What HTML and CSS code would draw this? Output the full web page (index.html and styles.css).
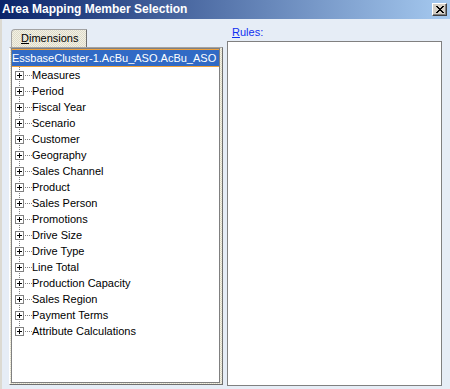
FILE: index.html
```html
<!DOCTYPE html>
<html>
<head>
<meta charset="utf-8">
<title>Area Mapping Member Selection</title>
<link rel="stylesheet" href="styles.css">
</head>
<body>
<div class="window">
  <div class="titlebar">
    <span class="title">Area Mapping Member Selection</span>
    <button class="close" type="button" aria-label="Close">
      <svg width="8" height="7" viewBox="0 0 8 7" shape-rendering="crispEdges"><path fill="#000" d="M0 0h2v1H0zM6 0h2v1H6zM1 1h2v1H1zM5 1h2v1H5zM2 2h4v1H2zM3 3h2v1H3zM2 4h4v1H2zM1 5h2v1H1zM5 5h2v1H5zM0 6h2v1H0zM6 6h2v1H6z"/></svg>
    </button>
  </div>
  <div class="client">
    <div class="left">
      <div class="tabs">
        <div class="tab"><u>D</u>imensions</div>
      </div>
      <div class="panel">
        <div class="tree">
          <div class="root">EssbaseCluster-1.AcBu_ASO.AcBu_ASO</div>
          <div class="children">
            <div class="node"><svg class="exp" width="9" height="9" viewBox="0 0 9 9" shape-rendering="crispEdges"><rect x="0.5" y="0.5" width="8" height="8" fill="#fff" stroke="#808080"/><path d="M2 4.5h5M4.5 2v5" stroke="#000"/></svg><span class="conn"></span><span class="lbl">Measures</span></div>
            <div class="node"><svg class="exp" width="9" height="9" viewBox="0 0 9 9" shape-rendering="crispEdges"><rect x="0.5" y="0.5" width="8" height="8" fill="#fff" stroke="#808080"/><path d="M2 4.5h5M4.5 2v5" stroke="#000"/></svg><span class="conn"></span><span class="lbl">Period</span></div>
            <div class="node"><svg class="exp" width="9" height="9" viewBox="0 0 9 9" shape-rendering="crispEdges"><rect x="0.5" y="0.5" width="8" height="8" fill="#fff" stroke="#808080"/><path d="M2 4.5h5M4.5 2v5" stroke="#000"/></svg><span class="conn"></span><span class="lbl">Fiscal Year</span></div>
            <div class="node"><svg class="exp" width="9" height="9" viewBox="0 0 9 9" shape-rendering="crispEdges"><rect x="0.5" y="0.5" width="8" height="8" fill="#fff" stroke="#808080"/><path d="M2 4.5h5M4.5 2v5" stroke="#000"/></svg><span class="conn"></span><span class="lbl">Scenario</span></div>
            <div class="node"><svg class="exp" width="9" height="9" viewBox="0 0 9 9" shape-rendering="crispEdges"><rect x="0.5" y="0.5" width="8" height="8" fill="#fff" stroke="#808080"/><path d="M2 4.5h5M4.5 2v5" stroke="#000"/></svg><span class="conn"></span><span class="lbl">Customer</span></div>
            <div class="node"><svg class="exp" width="9" height="9" viewBox="0 0 9 9" shape-rendering="crispEdges"><rect x="0.5" y="0.5" width="8" height="8" fill="#fff" stroke="#808080"/><path d="M2 4.5h5M4.5 2v5" stroke="#000"/></svg><span class="conn"></span><span class="lbl">Geography</span></div>
            <div class="node"><svg class="exp" width="9" height="9" viewBox="0 0 9 9" shape-rendering="crispEdges"><rect x="0.5" y="0.5" width="8" height="8" fill="#fff" stroke="#808080"/><path d="M2 4.5h5M4.5 2v5" stroke="#000"/></svg><span class="conn"></span><span class="lbl">Sales Channel</span></div>
            <div class="node"><svg class="exp" width="9" height="9" viewBox="0 0 9 9" shape-rendering="crispEdges"><rect x="0.5" y="0.5" width="8" height="8" fill="#fff" stroke="#808080"/><path d="M2 4.5h5M4.5 2v5" stroke="#000"/></svg><span class="conn"></span><span class="lbl">Product</span></div>
            <div class="node"><svg class="exp" width="9" height="9" viewBox="0 0 9 9" shape-rendering="crispEdges"><rect x="0.5" y="0.5" width="8" height="8" fill="#fff" stroke="#808080"/><path d="M2 4.5h5M4.5 2v5" stroke="#000"/></svg><span class="conn"></span><span class="lbl">Sales Person</span></div>
            <div class="node"><svg class="exp" width="9" height="9" viewBox="0 0 9 9" shape-rendering="crispEdges"><rect x="0.5" y="0.5" width="8" height="8" fill="#fff" stroke="#808080"/><path d="M2 4.5h5M4.5 2v5" stroke="#000"/></svg><span class="conn"></span><span class="lbl">Promotions</span></div>
            <div class="node"><svg class="exp" width="9" height="9" viewBox="0 0 9 9" shape-rendering="crispEdges"><rect x="0.5" y="0.5" width="8" height="8" fill="#fff" stroke="#808080"/><path d="M2 4.5h5M4.5 2v5" stroke="#000"/></svg><span class="conn"></span><span class="lbl">Drive Size</span></div>
            <div class="node"><svg class="exp" width="9" height="9" viewBox="0 0 9 9" shape-rendering="crispEdges"><rect x="0.5" y="0.5" width="8" height="8" fill="#fff" stroke="#808080"/><path d="M2 4.5h5M4.5 2v5" stroke="#000"/></svg><span class="conn"></span><span class="lbl">Drive Type</span></div>
            <div class="node"><svg class="exp" width="9" height="9" viewBox="0 0 9 9" shape-rendering="crispEdges"><rect x="0.5" y="0.5" width="8" height="8" fill="#fff" stroke="#808080"/><path d="M2 4.5h5M4.5 2v5" stroke="#000"/></svg><span class="conn"></span><span class="lbl">Line Total</span></div>
            <div class="node"><svg class="exp" width="9" height="9" viewBox="0 0 9 9" shape-rendering="crispEdges"><rect x="0.5" y="0.5" width="8" height="8" fill="#fff" stroke="#808080"/><path d="M2 4.5h5M4.5 2v5" stroke="#000"/></svg><span class="conn"></span><span class="lbl">Production Capacity</span></div>
            <div class="node"><svg class="exp" width="9" height="9" viewBox="0 0 9 9" shape-rendering="crispEdges"><rect x="0.5" y="0.5" width="8" height="8" fill="#fff" stroke="#808080"/><path d="M2 4.5h5M4.5 2v5" stroke="#000"/></svg><span class="conn"></span><span class="lbl">Sales Region</span></div>
            <div class="node"><svg class="exp" width="9" height="9" viewBox="0 0 9 9" shape-rendering="crispEdges"><rect x="0.5" y="0.5" width="8" height="8" fill="#fff" stroke="#808080"/><path d="M2 4.5h5M4.5 2v5" stroke="#000"/></svg><span class="conn"></span><span class="lbl">Payment Terms</span></div>
            <div class="node"><svg class="exp" width="9" height="9" viewBox="0 0 9 9" shape-rendering="crispEdges"><rect x="0.5" y="0.5" width="8" height="8" fill="#fff" stroke="#808080"/><path d="M2 4.5h5M4.5 2v5" stroke="#000"/></svg><span class="conn"></span><span class="lbl">Attribute Calculations</span></div>
          </div>
        </div>
      </div>
    </div>
    <div class="right">
      <label class="rules-label"><u>R</u>ules:</label>
      <div class="rules-box"></div>
    </div>
  </div>
</div>
</body>
</html>
```

FILE: styles.css
```css
html, body {
  margin: 0;
  padding: 0;
  height: 100%;
}

body {
  font-family: "Liberation Sans", Arial, sans-serif;
  font-size: 11px;
  color: #000;
  background: #e6edf6;
  overflow: hidden;
}

.window {
  height: 389px;
  display: flex;
  flex-direction: column;
}

.titlebar {
  flex: none;
  height: 19px;
  box-sizing: border-box;
  padding: 0 3px 0 2px;
  display: flex;
  align-items: center;
  justify-content: space-between;
  background: linear-gradient(to right, #0a246a, #a6caf0);
}

.title {
  color: #fff;
  font-weight: bold;
  font-size: 12px;
  line-height: 19px;
}

.close {
  width: 15px;
  height: 13px;
  padding: 0;
  margin: 0;
  box-sizing: border-box;
  display: flex;
  align-items: center;
  justify-content: center;
  background: #d4d0c8;
  border: 1px solid;
  border-color: #ffffff #404040 #404040 #ffffff;
  box-shadow: inset -1px -1px 0 #808080;
}

.close svg {
  display: block;
}

.client {
  flex: 1;
  min-height: 0;
  display: flex;
  gap: 4px;
  padding: 7px 8px 3px 7px;
  border-left: 2px solid #dcdad2;
}

.left {
  width: 214px;
  flex: none;
  display: flex;
  flex-direction: column;
  padding-top: 3px;
  margin-bottom: 1px;
}

.tabs {
  display: flex;
  padding-left: 2px;
}

.dotted {
  background: #eceadb;
}

.tab {
  width: 76px;
  height: 18px;
  box-sizing: border-box;
  padding-left: 9px;
  line-height: 16px;
  border: 1px solid;
  border-color: #a3a3a3 #6f6f6f transparent #a3a3a3;
  border-bottom: none;
  border-top-left-radius: 4px;
  background: repeating-conic-gradient(#f2f0e5 0 25%, #dedbc8 0 50%) 0 0 / 2px 2px;
}

.panel {
  flex: 1;
  min-height: 0;
  display: flex;
  flex-direction: column;
  padding: 0 2px 1px 1px;
  border: 1px solid;
  border-color: #a3a3a3 #6f6f6f #6f6f6f #ffffff;
  background: repeating-conic-gradient(#f2f0e5 0 25%, #dedbc8 0 50%) 0 0 / 2px 2px;
}

.tree {
  flex: 1;
  background: #fff;
  border: 1px solid #808080;
  overflow: hidden;
}

.root {
  height: 18px;
  box-sizing: border-box;
  margin: 0 -1px;
  border: 1px solid #f0a23c;
  background: #316ac5;
  color: #fff;
  line-height: 16px;
  white-space: nowrap;
}

.children {
  background-image: repeating-linear-gradient(to bottom, #808080 0 1px, transparent 1px 2px);
  background-repeat: no-repeat;
  background-position: 7px 0;
  background-size: 1px calc(100% - 8px);
}

.node {
  height: 16px;
  display: flex;
  align-items: flex-start;
  padding-left: 3px;
  white-space: nowrap;
}

.exp {
  display: block;
  flex: none;
  margin-top: 4px;
}

.conn {
  flex: none;
  width: 8px;
  height: 1px;
  margin-top: 8px;
  background: repeating-linear-gradient(to right, transparent 0 1px, #808080 1px 2px);
}

.lbl {
  line-height: 16px;
}

.right {
  flex: 1;
  min-width: 0;
  display: flex;
  flex-direction: column;
}

.rules-label {
  display: block;
  line-height: 13px;
  padding-left: 5px;
  color: #1030f0;
}

.rules-box {
  flex: 1;
  margin-top: 2px;
  background: #fff;
  border: 1px solid #808080;
}
```
